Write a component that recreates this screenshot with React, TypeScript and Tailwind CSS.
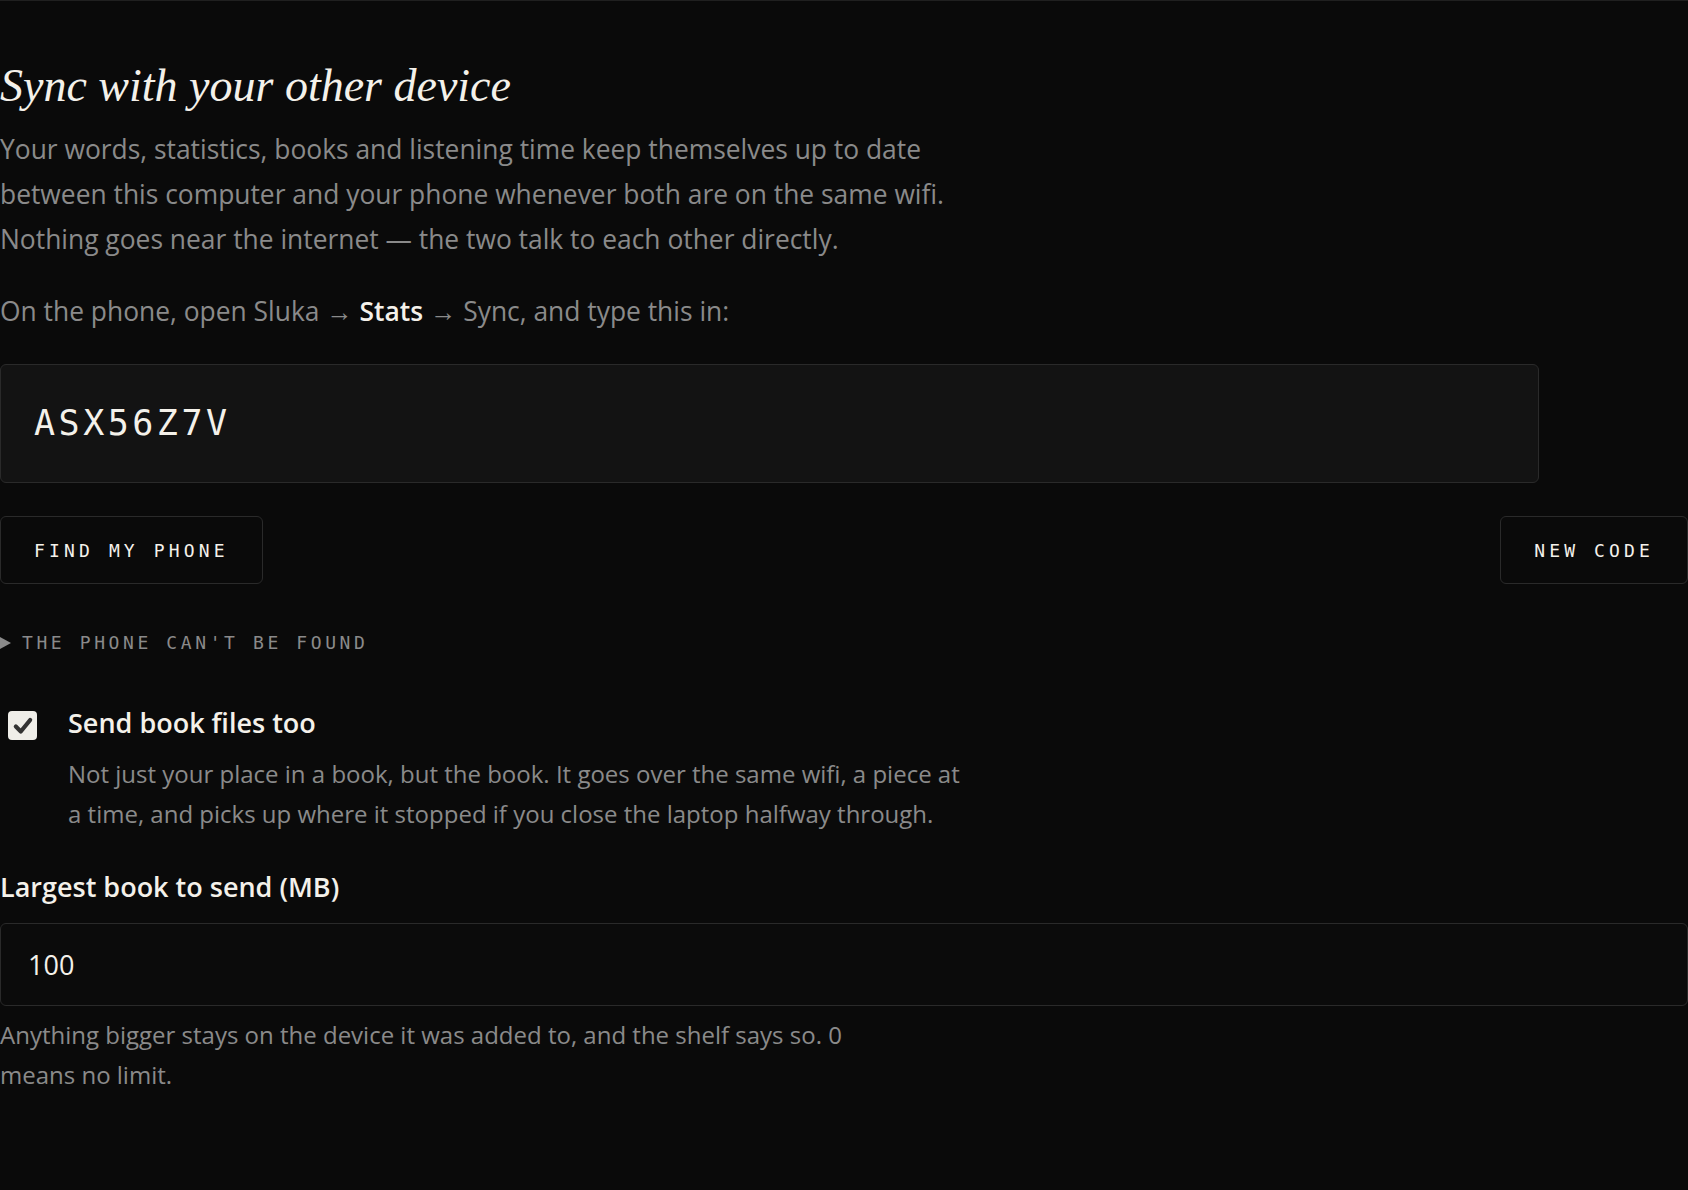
import { useState } from "react";

const mono = "font-['DejaVu_Sans_Mono',monospace]";

export default function App() {
  const [sendFiles, setSendFiles] = useState(true);
  const [maxSize, setMaxSize] = useState("100");

  return (
    <div className="min-h-screen bg-[#0a0a0a] border-t border-[#202020] font-['Open_Sans',sans-serif] text-[#8a8a8a]">
      <section className="pt-[57px] pb-24">
        {/* Heading + intro */}
        <h1 className="font-['Liberation_Serif',serif] italic text-[46px] leading-[1.2] text-[#f4f1ea]">
          Sync with your other device
        </h1>
        <p className="mt-[14px] max-w-[966px] text-[26.4px] leading-[45px]">
          Your words, statistics, books and listening time keep themselves up to date between this
          computer and your phone whenever both are on the same wifi. Nothing goes near the internet —
          the two talk to each other directly.
        </p>
        <p className="mt-[27px] text-[26.4px] leading-[45px]">
          On the phone, open Sluka → <strong className="font-semibold text-[#f4f1ea]">Stats</strong> → Sync,
          and type this in:
        </p>

        {/* Pairing code */}
        <div
          className={`mt-[30px] w-[1539px] h-[119px] flex items-center px-[33px] rounded-md border border-[#2a2a2a] bg-[#131313] text-[35px] tracking-[0.1em] text-[#f4f1ea] ${mono}`}
        >
          ASX56Z7V
        </div>

        <div className="mt-[33px] flex justify-between">
          <button
            className={`h-[68px] px-[33px] rounded-md border border-[#2a2a2a] bg-transparent text-[18px] tracking-[0.23em] text-[#f4f1ea] ${mono}`}
          >
            FIND MY PHONE
          </button>
          <button
            className={`h-[68px] px-[33px] rounded-md border border-[#2a2a2a] bg-transparent text-[18px] tracking-[0.23em] text-[#f4f1ea] ${mono}`}
          >
            NEW CODE
          </button>
        </div>

        {/* Troubleshooting toggle */}
        <div className={`mt-[47px] flex items-center gap-[11px] text-[18px] leading-[24px] tracking-[0.2em] text-[#8a8a8a] ${mono}`}>
          <svg width="11" height="12" viewBox="0 0 11 12" className="shrink-0">
            <path d="M0 0 L11 6 L0 12 Z" fill="#8a8a8a" />
          </svg>
          <span>THE PHONE CAN'T BE FOUND</span>
        </div>

        {/* Send files option */}
        <div className="mt-[50px] flex items-start">
          <button
            onClick={() => setSendFiles(!sendFiles)}
            className="ml-[8px] mt-[6px] w-[29px] h-[29px] rounded-[4px] bg-[#efeee9] flex items-center justify-center shrink-0"
          >
            {sendFiles && (
              <svg width="22" height="22" viewBox="0 0 20 20">
                <path d="M3.5 10.5 L8 15 L16.5 4.5" fill="none" stroke="#333" strokeWidth="3.8" strokeLinecap="round" strokeLinejoin="round" />
              </svg>
            )}
          </button>
          <div className="ml-[31px]">
            <div className="text-[27px] leading-[36px] font-semibold text-[#f4f1ea]">Send book files too</div>
            <p className="mt-[13px] max-w-[900px] text-[24px] leading-[40px]">
              Not just your place in a book, but the book. It goes over the same wifi, a piece at a
              time, and picks up where it stopped if you close the laptop halfway through.
            </p>
          </div>
        </div>

        {/* Size limit */}
        <label className="block mt-[35px] text-[27px] leading-[36px] font-semibold text-[#f4f1ea]">
          Largest book to send (MB)
        </label>
        <input
          value={maxSize}
          onChange={(e) => setMaxSize(e.target.value)}
          className="mt-[18px] w-full h-[83px] px-[27px] rounded-md border border-[#2a2a2a] bg-[#0b0b0b] text-[27px] text-[#f4f1ea] outline-none"
        />
        <p className="mt-[9px] max-w-[866px] text-[24px] leading-[40px]">
          Anything bigger stays on the device it was added to, and the shelf says so. 0 means no limit.
        </p>
      </section>
    </div>
  );
}
